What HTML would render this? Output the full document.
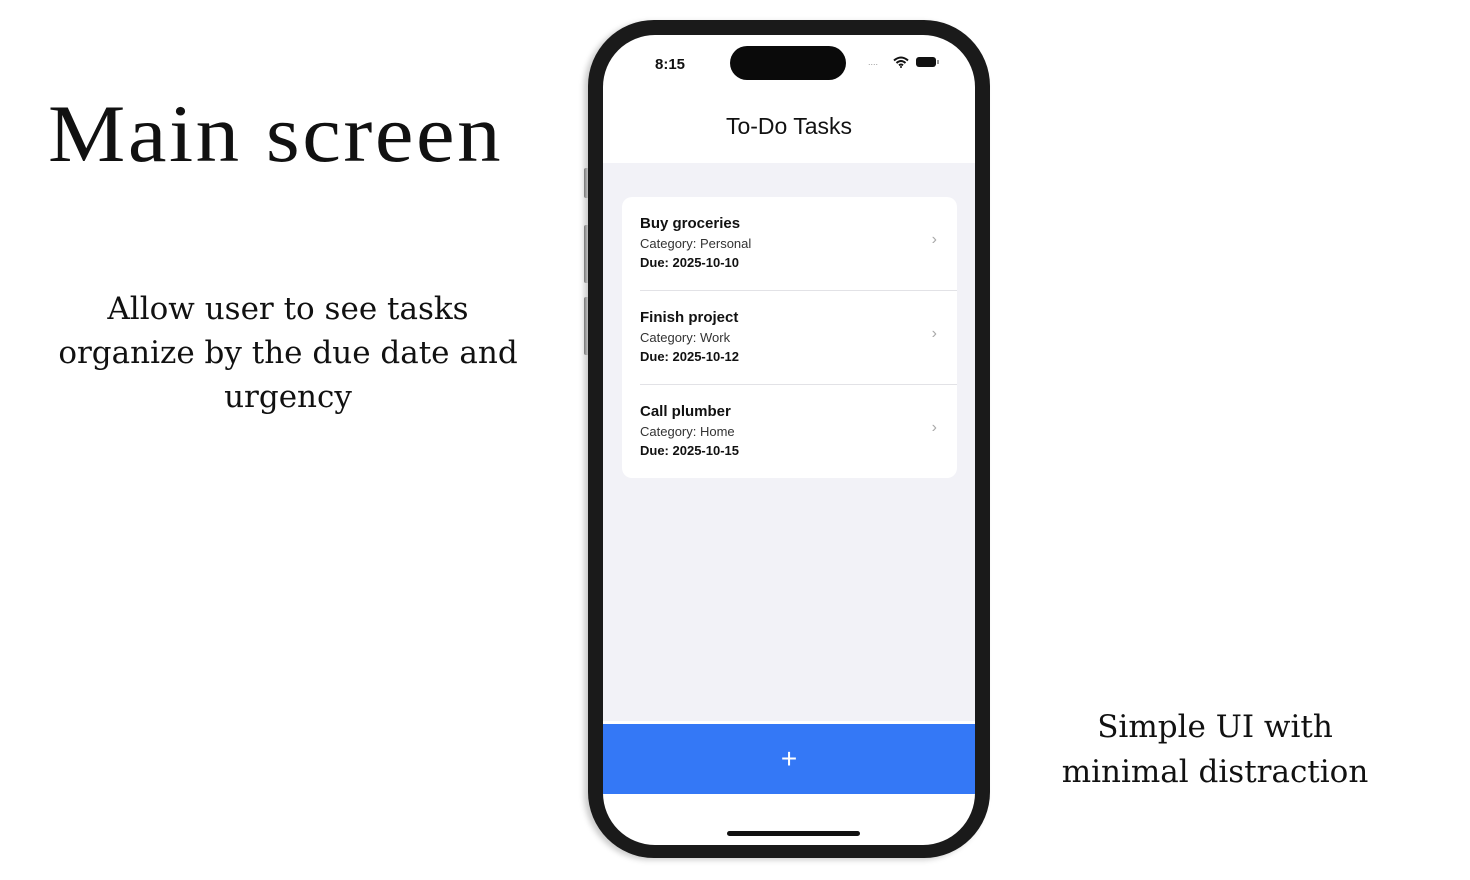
<!DOCTYPE html>
<html><head><style>
body{margin:0;width:1470px;height:880px;background:#fff;position:relative;overflow:hidden;font-family:"Liberation Sans",sans-serif}
.serif{font-family:"DejaVu Serif",serif;color:#111;position:absolute}
.phone{position:absolute;left:588px;top:20px;width:402px;height:838px;border-radius:66px;background:#1a1a1a;box-shadow:-4px 2px 6px #ccc}
.screen{position:absolute;left:603px;top:35px;width:372px;height:810px;border-radius:52px;background:#fff;overflow:hidden}
.btn{position:absolute;width:6px;background:#222;left:584px;border-radius:2px}
.list{position:absolute;left:0;top:128px;width:372px;height:558px;background:#f2f2f7}
.card{position:absolute;left:19px;top:34px;width:335px;height:281px;background:#fff;border-radius:10px}
.row{position:absolute;left:18px;width:317px;height:93px}
.row b{display:block;font-size:15px;font-weight:600;color:#111;margin-top:18px}
.row span{display:block;font-size:13px;color:#333;margin-top:4px}
.row i{display:block;font-style:normal;font-size:13px;font-weight:600;color:#111;margin-top:4px}
.chev{position:absolute;right:20px;top:34px;color:#aaa;font-size:16px}
.sep{position:absolute;left:18px;right:0;height:1px;background:#e2e2e6}
</style></head><body>
<div class="serif" style="left:48px;top:84px;font-size:82px;line-height:100px;font-family:'Liberation Serif',serif;letter-spacing:2.4px;transform:scaleX(1.06);transform-origin:left;white-space:nowrap">Main screen</div>
<div class="serif" style="left:0;top:287px;width:576px;text-align:center;font-size:31px;line-height:44px;white-space:nowrap">Allow user to see tasks<br>organize by the due date and<br>urgency</div>
<div class="serif" style="left:1000px;top:705px;width:430px;text-align:center;font-size:31px;line-height:45px;white-space:nowrap">Simple UI with<br>minimal distraction</div>
<div class="btn" style="top:168px;height:30px"></div>
<div class="btn" style="top:225px;height:58px"></div>
<div class="btn" style="top:297px;height:58px"></div>
<div class="phone"></div>
<div class="screen">
 <div style="position:absolute;left:52px;top:21px;font-size:15px;font-weight:600;color:#111">8:15</div>
 <div style="position:absolute;left:127px;top:11px;width:116px;height:34px;border-radius:17px;background:#0a0a0a"></div>
 <div style="position:absolute;left:265px;top:22px;font-size:9px;color:#999;letter-spacing:0">....</div>
 <svg style="position:absolute;left:290px;top:21px" width="16" height="12" viewBox="0 0 16 12"><path d="M1 4.5Q8-1.5 15 4.5M3.5 7Q8 3 12.5 7M6 9.3Q8 7.7 10 9.3" stroke="#111" stroke-width="2" fill="none"/><circle cx="8" cy="11" r="1" fill="#111"/></svg>
 <div style="position:absolute;left:313px;top:22px;width:20px;height:10px;border-radius:3px;background:#111"></div>
 <div style="position:absolute;left:334px;top:25px;width:2px;height:4px;background:#999"></div>
 <div style="position:absolute;left:0;width:372px;top:78px;text-align:center;font-size:23px;color:#111">To-Do Tasks</div>
 <div class="list">
  <div class="card">
   <div class="row" style="top:0"><b>Buy groceries</b><span>Category: Personal</span><i>Due: 2025-10-10</i><div class="chev">›</div></div>
   <div class="sep" style="top:93px"></div>
   <div class="row" style="top:94px"><b>Finish project</b><span>Category: Work</span><i>Due: 2025-10-12</i><div class="chev">›</div></div>
   <div class="sep" style="top:187px"></div>
   <div class="row" style="top:188px"><b>Call plumber</b><span>Category: Home</span><i>Due: 2025-10-15</i><div class="chev">›</div></div>
  </div>
 </div>
 <div style="position:absolute;left:0;top:689px;width:372px;height:70px;background:#3478f6;color:#fff;text-align:center;font-size:28px;line-height:70px">+</div>
 <div style="position:absolute;left:124px;top:796px;width:133px;height:5px;border-radius:3px;background:#111"></div>
</div>
</body></html>
